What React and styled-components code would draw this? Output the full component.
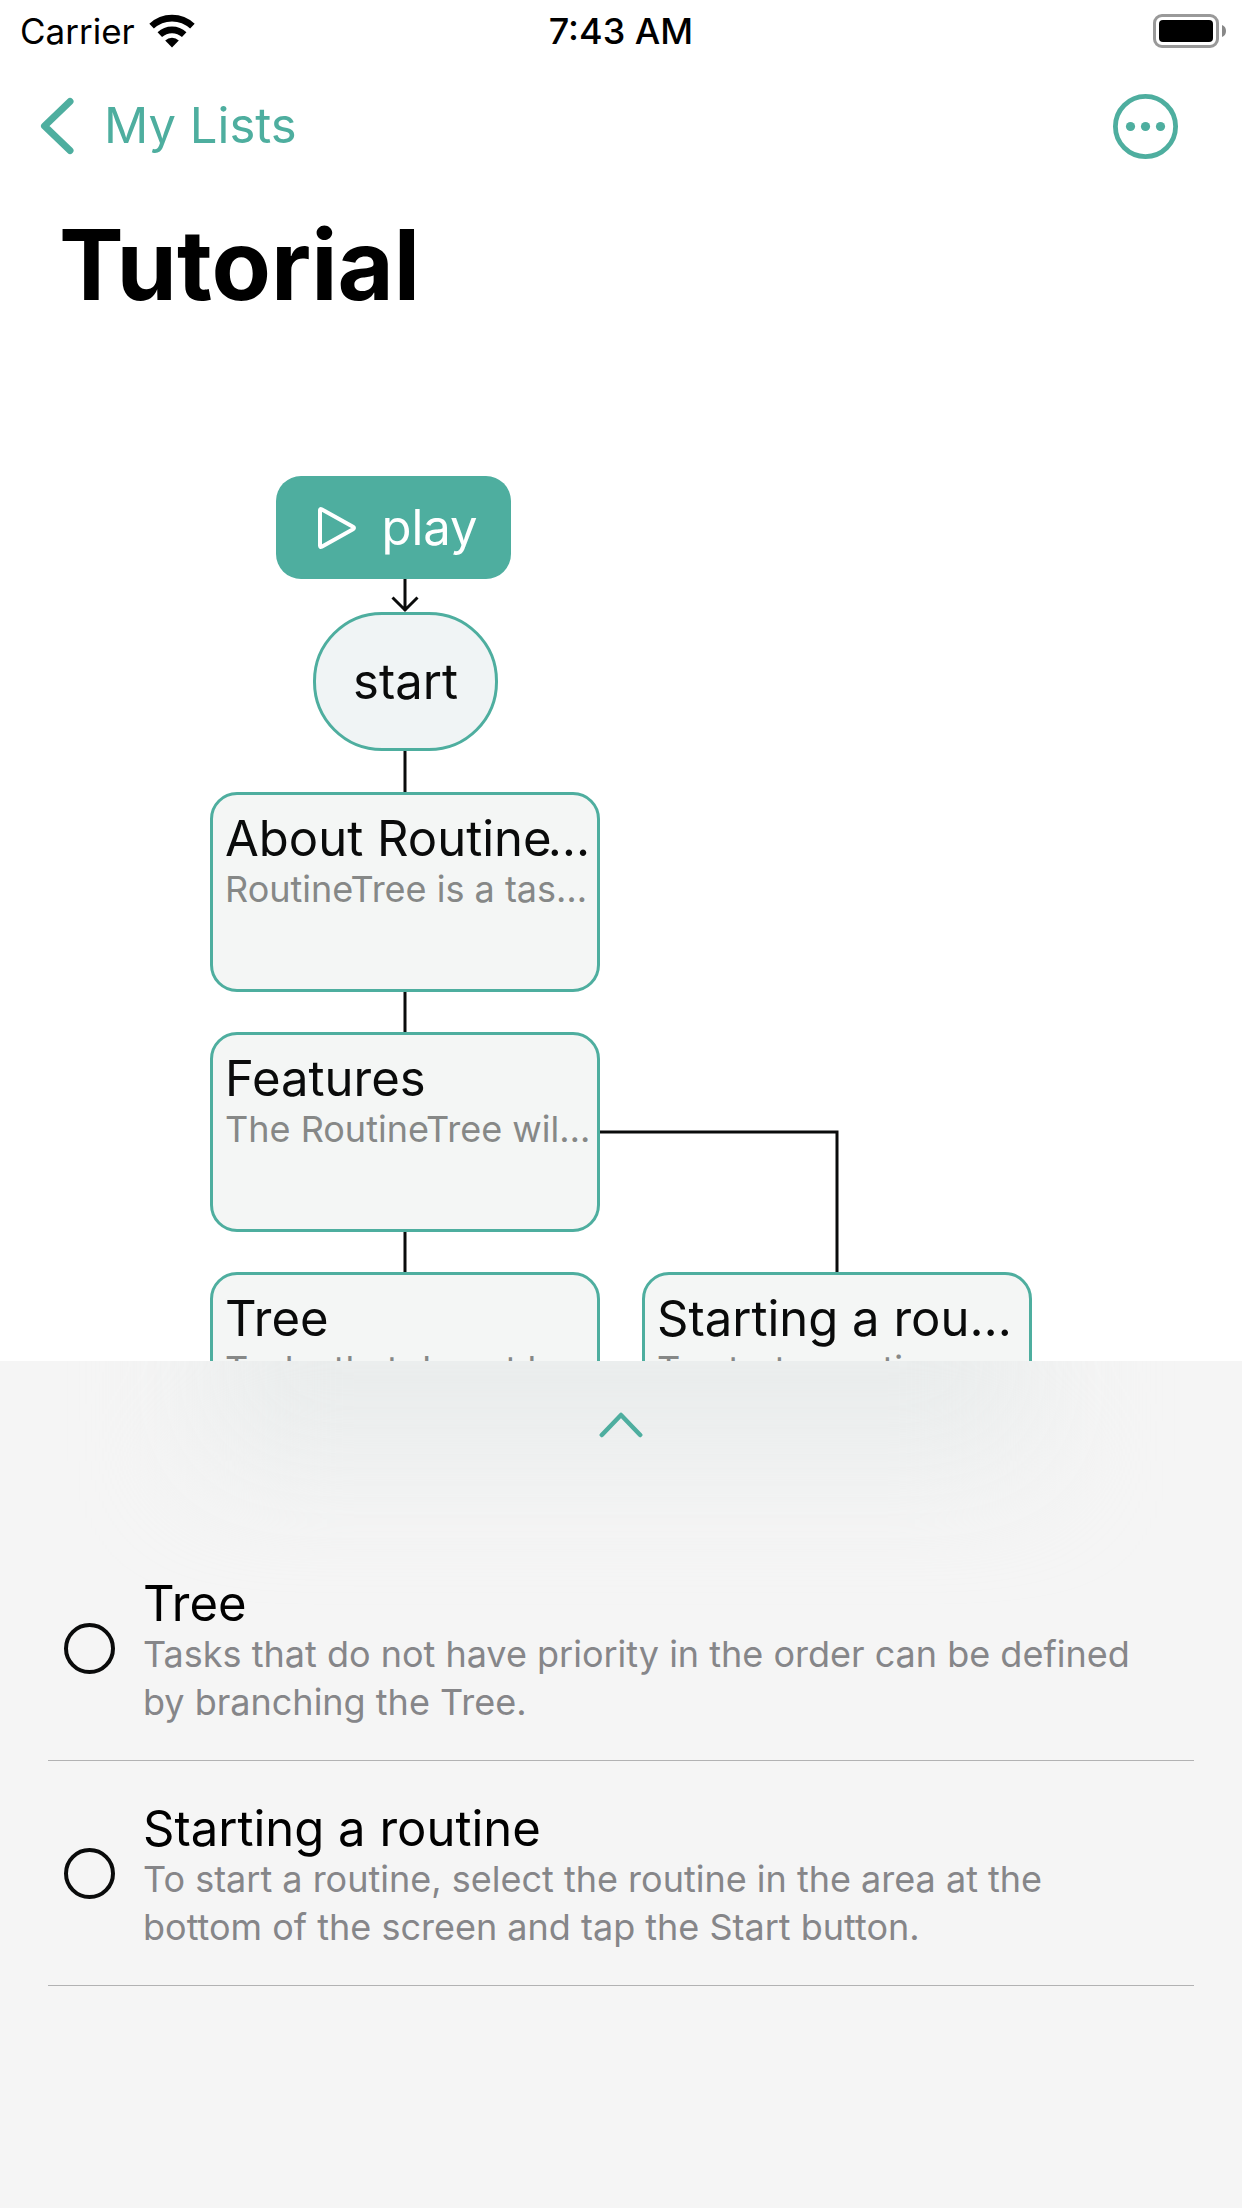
import React from "react";
import styled, { createGlobalStyle, css } from "styled-components";

const TEAL = "#4eae9f";

const GlobalStyle = createGlobalStyle`
  *, *::before { box-sizing: border-box; }
  body {
    margin: 0;
    background: #ffffff;
    color: #000000;
    font-family: Inter, "Liberation Sans", sans-serif;
  }
`;

const Screen = styled.div`
  display: flex;
  flex-direction: column;
  height: 100vh;
  overflow: hidden;
`;

const StatusBar = styled.div`
  display: grid;
  grid-template-columns: 1fr auto 1fr;
  align-items: center;
  height: 60px;
  padding: 2px 16px 0;
  font-size: 36px;
  line-height: 44px;
`;

const StatusSide = styled.div`
  display: flex;
  align-items: center;
  justify-content: ${(p) => (p.$end ? "flex-end" : "flex-start")};
  gap: 14px;
  padding-left: 4px;
  font-size: 35px;
`;

const Clock = styled.time`
  font-weight: 500;
`;

const NavBar = styled.nav`
  display: flex;
  align-items: center;
  justify-content: space-between;
  height: 132px;
  padding: 0 64px 0 39px;
`;

const BackLink = styled.a`
  display: flex;
  align-items: center;
  gap: 29px;
  color: ${TEAL};
  font-size: 49px;
  line-height: 62px;
  text-decoration: none;
`;

const IconButton = styled.button`
  display: flex;
  padding: 0;
  border: 0;
  background: none;
  color: ${TEAL};
`;

const Title = styled.h1`
  margin: 0;
  padding: 13px 59px 23px;
  font-size: 97px;
  line-height: 120px;
  font-weight: 700;
`;

const Canvas = styled.main`
  position: relative;
  flex: 1;
  min-height: 0;
  overflow: hidden;
`;

const Edges = styled.svg`
  position: absolute;
  inset: 0;
  width: 100%;
  height: 100%;
  fill: none;
  stroke: #0a0b0b;
  stroke-width: 3px;
`;

const place = css`
  position: absolute;
  left: ${(p) => p.$x}px;
  top: ${(p) => p.$y}px;
`;

const PlayButton = styled.button`
  ${place}
  display: flex;
  align-items: center;
  justify-content: center;
  gap: 24px;
  width: 235px;
  height: 103px;
  padding: 0 0 0 8px;
  border: 0;
  border-radius: 25px;
  background: ${TEAL};
  color: #ffffff;
  font: inherit;
  font-size: 49px;
  line-height: 62px;
`;

const StartNode = styled.div`
  ${place}
  display: flex;
  align-items: center;
  justify-content: center;
  width: 185px;
  height: 139px;
  border: 3px solid ${TEAL};
  border-radius: 69px;
  background: #f0f4f5;
  color: #0a0b0b;
  font-size: 49px;
  line-height: 62px;
`;

const TaskNode = styled.article`
  ${place}
  width: 390px;
  height: 200px;
  padding: 13px 4px 13px 12px;
  border: 3px solid ${TEAL};
  border-radius: 27px;
  background: #f4f6f5;
`;

const TaskName = styled.h2`
  margin: 0 0 -5px;
  overflow: hidden;
  color: ${(p) => (p.$soft ? "#0a0b0b" : "#000000")};
  font-size: 49px;
  line-height: 62px;
  font-weight: 400;
  text-overflow: ellipsis;
  white-space: nowrap;
`;

const TaskPreview = styled.p`
  margin: 0;
  overflow: hidden;
  color: #868887;
  font-size: 36px;
  line-height: 48px;
  text-overflow: ellipsis;
  white-space: nowrap;
`;

const Sheet = styled.section`
  position: relative;
  overflow: hidden;
  padding: 0 48px 222px;
  background: #f5f5f5;

  &::before {
    content: "";
    position: absolute;
    left: 17%;
    right: 17%;
    top: -100px;
    height: 200px;
    background: #e9ecec;
    filter: blur(60px);
  }
`;

const SheetHandle = styled.button`
  position: relative;
  display: flex;
  justify-content: center;
  width: 100%;
  height: 175px;
  padding: 50px 0 0;
  border: 0;
  background: none;
  color: ${TEAL};
`;

const TaskList = styled.ul`
  position: relative;
  margin: 0;
  padding: 0;
  list-style: none;
`;

const TaskRow = styled.li`
  border-bottom: 1px solid #b2b2b3;
`;

const TaskLabel = styled.label`
  display: flex;
  align-items: center;
  gap: 28px;
  padding: 0 36px 0 16px;
`;

const TaskCheck = styled.input`
  appearance: none;
  flex: none;
  width: 51px;
  height: 51px;
  margin: 0;
  border: 4px solid #0a0b0b;
  border-radius: 50%;

  &:checked {
    background: ${TEAL};
  }
`;

const TaskText = styled.div`
  padding: 37px 0 34px;
`;

const TaskDescription = styled.p`
  margin: 0;
  color: #868689;
  font-size: 36px;
  line-height: 48px;
`;

const TREE = {
  id: "tree",
  name: "Tree",
  text: "Tasks that do not have priority in the order can be defined by branching the Tree.",
};
const STARTING = {
  id: "starting",
  name: "Starting a routine",
  text: "To start a routine, select the routine in the area at the bottom of the screen and tap the Start button.",
};

const NODES = [
  { id: "about", name: "About RoutineTree", text: "RoutineTree is a task manager", x: 210, y: 444 },
  { id: "features", name: "Features", text: "The RoutineTree will help", x: 210, y: 684 },
  { ...TREE, x: 210, y: 924 },
  { ...STARTING, x: 642, y: 924 },
];

function WifiIcon() {
  return (
    <svg width="46" height="34" viewBox="0 0 46 34" aria-label="Wi-Fi">
      <path d="M23 33.5 16.2 26.6a9.8 9.8 0 0 1 13.6 0Z" />
      <g fill="none" stroke="#000" strokeWidth="6.6">
        <path d="M10.8 20.6a18 18 0 0 1 24.4 0" />
        <path d="M2.6 12.2a29.7 29.7 0 0 1 40.8 0" />
      </g>
    </svg>
  );
}

function BatteryIcon() {
  return (
    <svg width="74" height="34" viewBox="0 0 74 34" aria-label="Battery full">
      <rect x="2.5" y="1.5" width="63" height="31" rx="7.5" fill="none" stroke="#999" strokeWidth="3" />
      <rect x="7" y="6" width="54" height="22" rx="4" />
      <path d="M70 11a6.5 6.5 0 0 1 0 12Z" fill="#888" />
    </svg>
  );
}

export default function App() {
  return (
    <Screen>
      <GlobalStyle />
      <StatusBar>
        <StatusSide>
          <span>Carrier</span>
          <WifiIcon />
        </StatusSide>
        <Clock>7:43 AM</Clock>
        <StatusSide $end>
          <BatteryIcon />
        </StatusSide>
      </StatusBar>
      <NavBar>
        <BackLink href="#lists">
          <svg width="36" height="58" viewBox="0 0 36 58" fill="none" stroke="currentColor" strokeWidth="7" strokeLinecap="round" strokeLinejoin="round">
            <path d="M31 4.5 5.500 29 31 53.500" />
          </svg>
          My Lists
        </BackLink>
        <IconButton aria-label="More">
          <svg width="65" height="65" viewBox="0 0 65 65">
            <circle cx="32.5" cy="32.5" r="30.100" fill="none" stroke="currentColor" strokeWidth="4.800" />
            <g fill="currentColor">
              <circle cx="17.500" cy="32.500" r="4.600" />
              <circle cx="32.500" cy="32.500" r="4.600" />
              <circle cx="47.500" cy="32.500" r="4.600" />
            </g>
          </svg>
        </IconButton>
      </NavBar>
      <Title>Tutorial</Title>
      <Canvas>
        <Edges aria-hidden="true">
          <path d="M405 231V263M392.500 249.500 405 262l12.500-12.500" />
          <path d="M405 403V444M405 644V684M405 884V924" />
          <path d="M600 784H837V924" />
        </Edges>
        <PlayButton $x={276} $y={128}>
          <svg width="40" height="44" viewBox="0 0 40 44" fill="none" stroke="currentColor" strokeWidth="4" strokeLinejoin="round">
            <path d="M4.500 3.200Q3 2.500 3 4.500V39.500Q3 41.500 4.700 40.700L36 23.200Q38 22 36 20.800Z" />
          </svg>
          play
        </PlayButton>
        <StartNode $x={313} $y={264}>start</StartNode>
        {NODES.map((n) => (
          <TaskNode key={n.id} $x={n.x} $y={n.y}>
            <TaskName $soft>{n.name}</TaskName>
            <TaskPreview>{n.text}</TaskPreview>
          </TaskNode>
        ))}
      </Canvas>
      <Sheet>
        <SheetHandle aria-label="Expand">
          <svg width="44" height="27" viewBox="0 0 44 27" fill="none" stroke="currentColor" strokeWidth="4.500" strokeLinecap="round" strokeLinejoin="round">
            <path d="M2.800 24 22 4 41.200 24" />
          </svg>
        </SheetHandle>
        <TaskList>
          {[TREE, STARTING].map((t) => (
            <TaskRow key={t.id}>
              <TaskLabel htmlFor={t.id}>
                <TaskCheck type="checkbox" id={t.id} />
                <TaskText>
                  <TaskName>{t.name}</TaskName>
                  <TaskDescription>{t.text}</TaskDescription>
                </TaskText>
              </TaskLabel>
            </TaskRow>
          ))}
        </TaskList>
      </Sheet>
    </Screen>
  );
}
